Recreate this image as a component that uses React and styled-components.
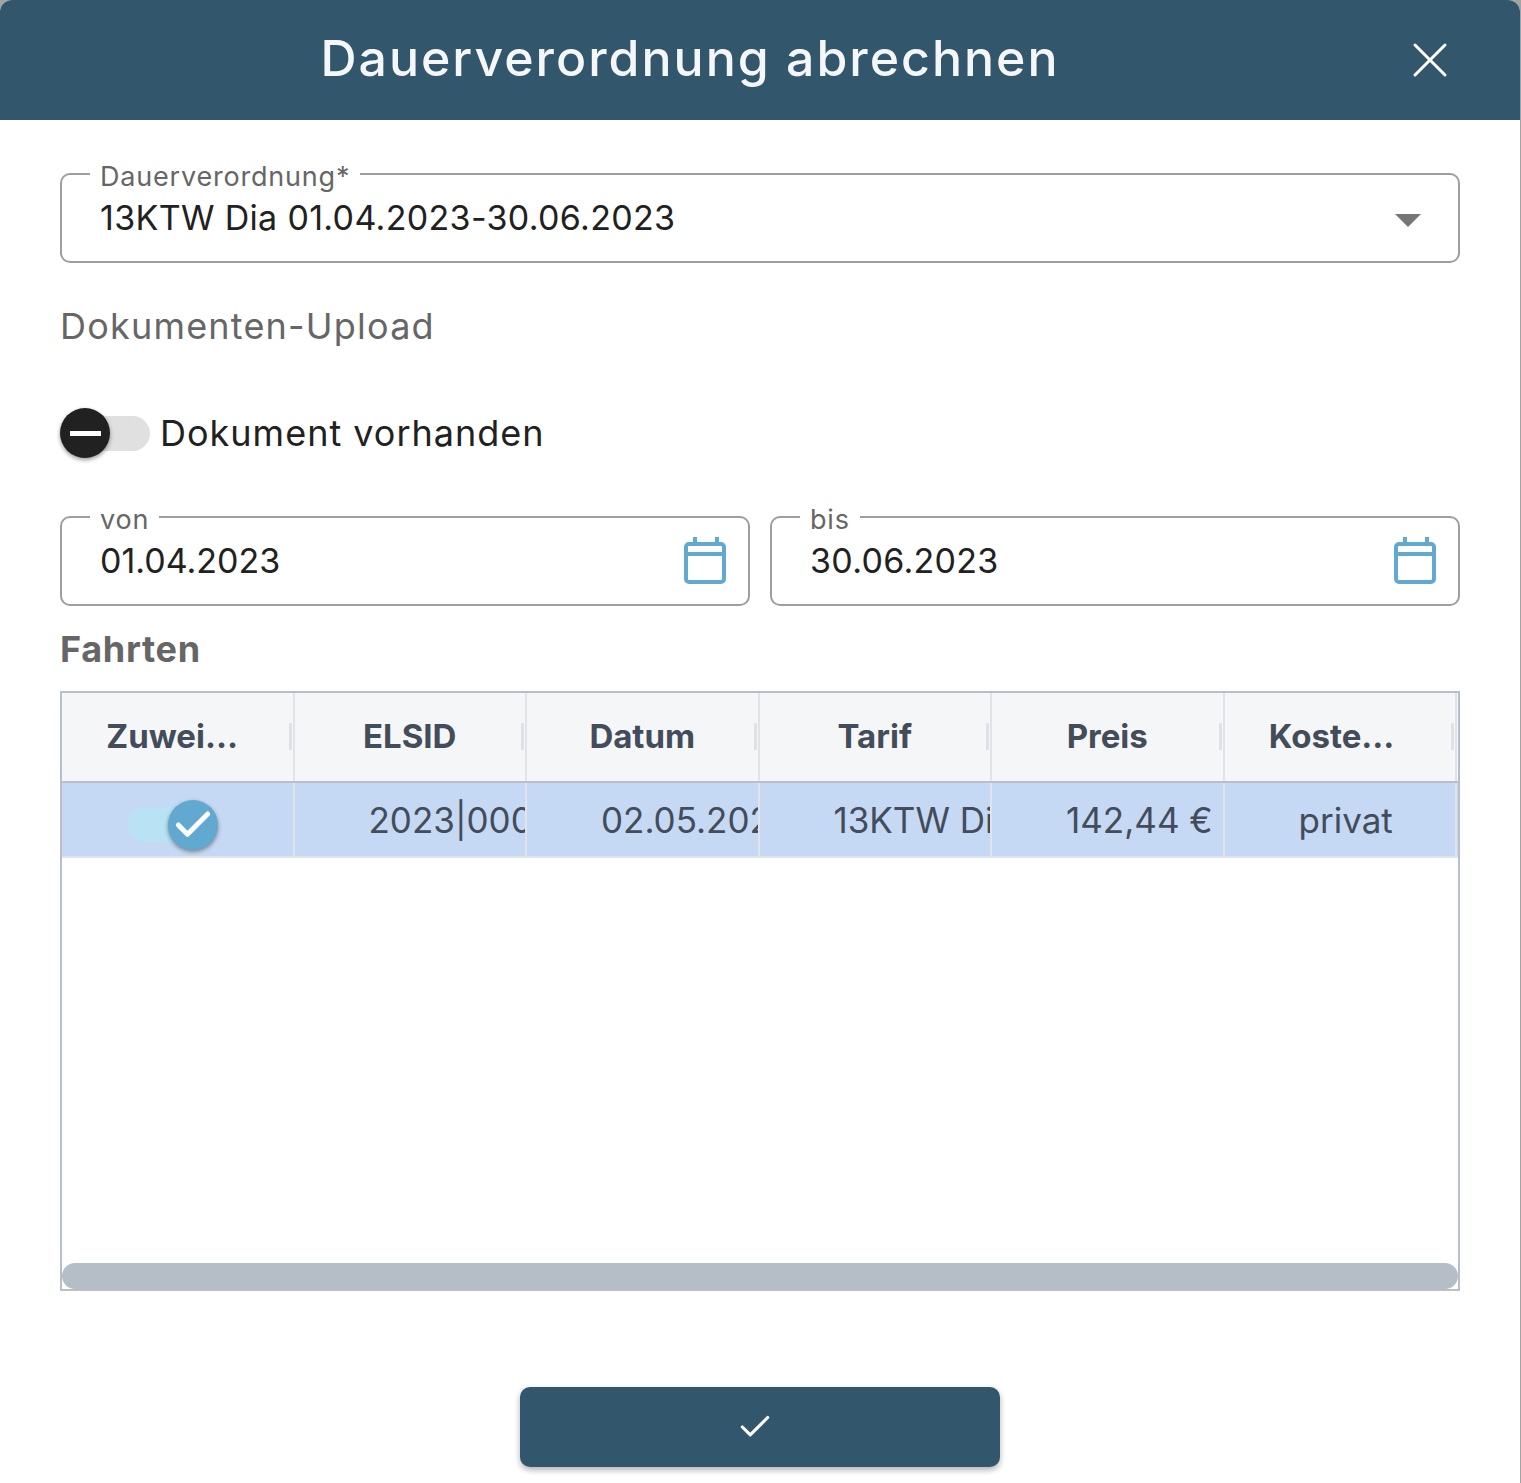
import styled, { createGlobalStyle } from "styled-components";
import { X, Check } from "lucide-react";

const GlobalStyle = createGlobalStyle`
html, body {
  margin: 0;
  padding: 0;
  background: #a3a3a3;
}
* {
  box-sizing: border-box;
}
`;

const Modal = styled.div`
width: 1520px;
height: 1483px;
background: #fff;
border-radius: 12px 12px 0 0;
overflow: hidden;
font-family: Inter, "Noto Sans", sans-serif;
`;

const Header = styled.header`
height: 120px;
background: #32566b;
display: flex;
align-items: center;
padding-right: 70px;
`;

const Title = styled.h1`
flex: 1;
margin: 0;
padding-bottom: 4px;
text-align: center;
color: #f5f6f8;
font-size: 50px;
font-weight: 500;
letter-spacing: 2px;
`;

const CloseButton = styled.button`
width: 40px;
height: 40px;
padding: 0;
margin-left: 30px;
background: transparent;
border: none;
color: #fff;
display: flex;
align-items: center;
justify-content: center;

svg {
  flex: none;
}
`;

const Body = styled.div`
padding: 37px 60px 0;
display: flex;
flex-direction: column;
`;

const Field = styled.fieldset`
flex: ${(p) => (p.$half ? "1" : "none")};
min-width: 0;
margin: 0;
padding: 0 21px 0 38px;
height: 106px;
border: 2px solid #9e9e9e;
border-radius: 10px;
display: flex;
align-items: flex-start;
justify-content: space-between;
`;

const Legend = styled.legend`
margin-left: -10px;
padding: 6px 10px 0;
font-size: 27px;
line-height: 28px;
color: #666;
letter-spacing: 0.8px;
`;

const FieldValue = styled.div`
font-size: 34px;
line-height: 48px;
margin-top: 3px;
color: #212121;
white-space: nowrap;
letter-spacing: ${(p) => p.$track || 0}px;
`;

const Arrow = styled.span`
width: 0;
height: 0;
margin: 23px 16px 0 0;
border-left: 13px solid transparent;
border-right: 13px solid transparent;
border-top: 13px solid #757575;
`;

const SectionTitle = styled.h2`
margin: ${(p) => p.$top}px 0 0;
font-size: 36px;
line-height: 48px;
font-weight: ${(p) => (p.$bold ? 700 : 400)};
letter-spacing: ${(p) => (p.$bold ? 0.7 : 1.2)}px;
color: #666;
`;

const ToggleRow = styled.div`
display: flex;
align-items: center;
height: 50px;
margin-top: 58px;
`;

const ToggleLabel = styled.span`
font-size: 36px;
letter-spacing: 1px;
color: #212121;
margin-left: 10px;
`;

const Track = styled.span`
display: inline-flex;
align-items: center;
width: 90px;
height: 35px;
border-radius: 18px;
background: ${(p) => (p.$on ? "#b9e2f5" : "#e0e0e0")};
justify-content: ${(p) => (p.$on ? "flex-end" : "flex-start")};
`;

const Thumb = styled.span`
flex: none;
width: 50px;
height: 50px;
border-radius: 50%;
background: ${(p) => (p.$on ? "#62a9d2" : "#212121")};
color: #fff;
display: flex;
align-items: center;
justify-content: center;
box-shadow: 0 2px 4px rgba(0, 0, 0, 0.4);

svg {
  flex: none;
}
`;

const Minus = styled.span`
width: 31px;
height: 5px;
background: #fff;
`;

const DateRow = styled.div`
display: flex;
gap: 20px;
margin-top: 42px;
`;

const Grid = styled.div`
margin-top: 18px;
height: 600px;
border: 2px solid #b9bfc9;
display: flex;
flex-direction: column;
color: #434c5a;
`;

const Columns = styled.div`
display: grid;
grid-template-columns: repeat(6, 232.5px);
`;

const HeadRow = styled(Columns)`
height: 90px;
background: #f5f6f8;
border-bottom: 2px solid #b9bfc9;
`;

const HeadCell = styled.div`
position: relative;
display: flex;
align-items: center;
justify-content: center;
padding-bottom: 3px;
border-right: 2px solid #e0e4ea;
font-size: 33px;
font-weight: 700;
`;

const HeadText = styled.span`
width: ${(p) => (p.$cut ? "142px" : "auto")};
white-space: nowrap;
overflow: hidden;
text-overflow: ellipsis;
`;

const Resizer = styled.span`
position: absolute;
right: 1px;
top: 30px;
width: 3px;
height: 27px;
background: #dfe1e5;
`;

const BodyRow = styled(Columns)`
height: 75px;
background: #c5d9f4;
border-bottom: 2px solid #e0e4ea;
`;

const Cell = styled.div`
display: flex;
align-items: center;
overflow: hidden;
white-space: nowrap;
padding: ${(p) => (p.$toggle ? "10px 0 0 66px" : "0 0 0 74px")};
border-right: 2px solid #e0e4ea;
font-size: 35px;
`;

const GridSpace = styled.div`
flex: 1;
`;

const Scrollbar = styled.div`
height: 26px;
border-radius: 13px;
background: #b5bdc7;
`;

const Footer = styled.div`
display: flex;
justify-content: center;
margin-top: 96px;
`;

const SubmitButton = styled.button`
width: 480px;
height: 80px;
padding: 0 10px 0 0;
border: none;
border-radius: 10px;
background: #32566b;
color: #fff;
display: flex;
align-items: center;
justify-content: center;
box-shadow: 0 3px 6px rgba(0, 0, 0, 0.3);
`;

const CalendarSvg = styled.svg`
flex: none;
margin-top: 2px;
`;

function CalendarIcon() {
  return (
    <CalendarSvg width="44" height="48" viewBox="0 0 44 48" fill="none" stroke="#62a9d2" strokeWidth="4">
      <rect x="3" y="8" width="38" height="38" rx="3" />
      <path d="M3 18H41M12 1V8M34 1V8" />
    </CalendarSvg>
  );
}

const columns = [
  { title: "Zuweisung", cut: true },
  { title: "ELSID" },
  { title: "Datum" },
  { title: "Tarif" },
  { title: "Preis" },
  { title: "Kostenträger", cut: true },
];

const cells = ["2023|000123", "02.05.2023", "13KTW Dia", "142,44 €", "privat"];

export default function App() {
  return (
    <>
      <GlobalStyle />
      <Modal>
        <Header>
          <Title>Dauerverordnung abrechnen</Title>
          <CloseButton>
            <X size={60} strokeWidth={1.2} />
          </CloseButton>
        </Header>
        <Body>
          <Field>
            <Legend>Dauerverordnung*</Legend>
            <FieldValue $track={0.33}>13KTW Dia 01.04.2023-30.06.2023</FieldValue>
            <Arrow />
          </Field>

          <SectionTitle $top={39}>Dokumenten-Upload</SectionTitle>

          <ToggleRow>
            <Track>
              <Thumb>
                <Minus />
              </Thumb>
            </Track>
            <ToggleLabel>Dokument vorhanden</ToggleLabel>
          </ToggleRow>

          <DateRow>
            <Field $half>
              <Legend>von</Legend>
              <FieldValue>01.04.2023</FieldValue>
              <CalendarIcon />
            </Field>
            <Field $half>
              <Legend>bis</Legend>
              <FieldValue $track={0.3}>30.06.2023</FieldValue>
              <CalendarIcon />
            </Field>
          </DateRow>

          <SectionTitle $top={19} $bold>Fahrten</SectionTitle>

          <Grid>
            <HeadRow>
              {columns.map((col) => (
                <HeadCell key={col.title}>
                  <HeadText $cut={col.cut}>{col.title}</HeadText>
                  <Resizer />
                </HeadCell>
              ))}
            </HeadRow>
            <BodyRow>
              <Cell $toggle>
                <Track $on>
                  <Thumb $on>
                    <Check size={44} strokeWidth={2.7} />
                  </Thumb>
                </Track>
              </Cell>
              {cells.map((text) => (
                <Cell key={text}>{text}</Cell>
              ))}
            </BodyRow>
            <GridSpace />
            <Scrollbar />
          </Grid>

          <Footer>
            <SubmitButton>
              <Check size={38} strokeWidth={2} />
            </SubmitButton>
          </Footer>
        </Body>
      </Modal>
    </>
  );
}
